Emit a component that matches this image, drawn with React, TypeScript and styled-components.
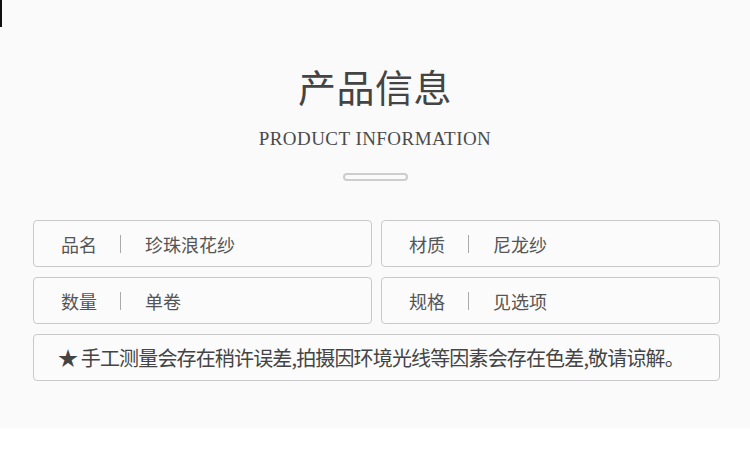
import React from 'react'
import styled, { createGlobalStyle } from 'styled-components'

const GlobalStyle = createGlobalStyle`
  html, body {
    margin: 0;
    padding: 0;
    background: #ffffff;
  }
  body {
    font-family: "Noto Sans CJK SC", "Noto Sans", sans-serif;
  }
`

const Section = styled.section`
  position: relative;
  height: 428px;
  background-color: #fafafa;
  box-sizing: border-box;
  padding-top: 62px;
`

const EdgeMark = styled.div`
  position: absolute;
  left: 0;
  top: 0;
  width: 2px;
  height: 27px;
  background-color: #111;
`

const Title = styled.h2`
  margin: 0;
  text-align: center;
  font-size: 38px;
  line-height: 48px;
  font-weight: 400;
  color: #444;
  letter-spacing: 0.5px;
`

const Subtitle = styled.p`
  margin: 17px 0 0;
  text-align: center;
  font-family: "Liberation Serif", "DejaVu Serif", serif;
  font-size: 19px;
  line-height: 24px;
  color: #4a4a4a;
  letter-spacing: 0.45px;
`

const Pill = styled.div`
  width: 61px;
  height: 4px;
  margin: 22px auto 0;
  border: 2px solid #cdcdcd;
  border-radius: 5px;
`

const Grid = styled.div`
  display: grid;
  grid-template-columns: 339px 339px;
  column-gap: 9px;
  row-gap: 10px;
  margin: 39px 0 0 33px;
`

const Box = styled.div<{ $wide?: boolean }>`
  grid-column: ${({ $wide }) => ($wide ? '1 / span 2' : 'auto')};
  box-sizing: border-box;
  height: 47px;
  border: 1px solid #c9c9c9;
  border-radius: 4px;
  background-color: #fbfbfb;
  display: flex;
  align-items: center;
  padding-left: ${({ $wide }) => ($wide ? '24px' : '27px')};
  color: #555;
  font-size: 18px;
`

const Label = styled.span`
  width: 37px;
`

const Divider = styled.span`
  width: 1px;
  height: 18px;
  background-color: #aaa;
  margin: 0 24px 0 22px;
`

const Note = styled.span`
  font-size: 20px;
  color: #444;
  letter-spacing: -0.85px;
`

const rows = [
  { label: '品名', value: '珍珠浪花纱' },
  { label: '材质', value: '尼龙纱' },
  { label: '数量', value: '单卷' },
  { label: '规格', value: '见选项' },
]

export default function App() {
  return (
    <>
      <GlobalStyle />
      <Section>
        <EdgeMark />
        <Title>产品信息</Title>
        <Subtitle>PRODUCT INFORMATION</Subtitle>
        <Pill />
        <Grid>
          {rows.map((r) => (
            <Box key={r.label}>
              <Label>{r.label}</Label>
              <Divider />
              <span>{r.value}</span>
            </Box>
          ))}
          <Box $wide>
            <Note>★ 手工测量会存在稍许误差,拍摄因环境光线等因素会存在色差,敬请谅解。</Note>
          </Box>
        </Grid>
      </Section>
    </>
  )
}
